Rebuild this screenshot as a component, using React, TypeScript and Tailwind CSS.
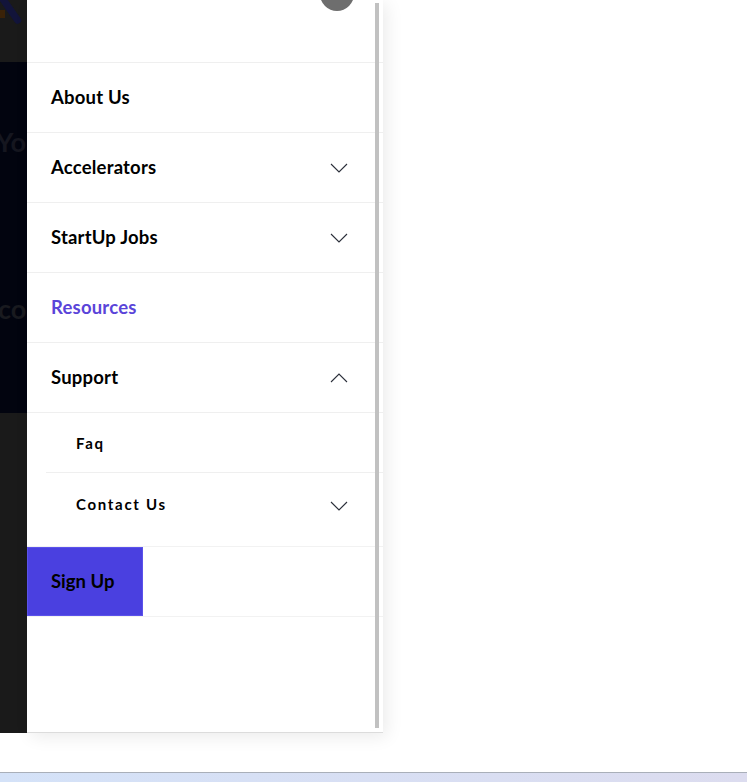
import React from "react";

type Item = { label: string; chevron?: "down" | "up"; active?: boolean };

const items: Item[] = [
  { label: "About Us" },
  { label: "Accelerators", chevron: "down" },
  { label: "StartUp Jobs", chevron: "down" },
  { label: "Resources", active: true },
  { label: "Support", chevron: "up" },
];

function Chevron({ dir = "down" }: { dir?: "down" | "up" }) {
  return (
    <svg width="18" height="10" viewBox="0 0 18 10" className="shrink-0">
      <polyline
        points={dir === "down" ? "1,1 9,9 17,1" : "1,9 9,1 17,9"}
        fill="none"
        stroke="#2b2f3a"
        strokeWidth="1.1"
      />
    </svg>
  );
}

export default function App() {
  return (
    <div className="w-[747px] h-[782px] flex flex-col bg-white overflow-hidden font-['Lato','Liberation_Sans',sans-serif]">
      <div className="h-[772px] flex flex-col">
        <div className="flex h-[733px]">
          {/* page behind the drawer */}
          <div className="w-[27px] flex flex-col">
            <div className="h-[62px] bg-[#1a1a1a] relative overflow-hidden">
              <div className="absolute left-0 top-[10px] w-[5px] h-[8px] bg-[#3a2208]" />
              <div className="absolute left-[7px] -top-[6px] w-[7px] h-[32px] rounded-full bg-[#12143a] rotate-[-35deg]" />
            </div>
            <div className="h-[351px] bg-[#02040f] flex flex-col text-[#15161f] font-bold text-[27px] leading-none overflow-hidden">
              <span className="mt-[66px] -ml-[4px] whitespace-nowrap">You</span>
              <span className="mt-[140px] -ml-[2px] text-[#191a1f] whitespace-nowrap">co</span>
            </div>
            <div className="flex-1 bg-[#1a1a1a]" />
          </div>

          {/* drawer */}
          <div className="w-[356px] h-[733px] bg-white relative shadow-[4px_4px_16px_rgba(0,0,0,0.08)] border-b border-[#dcdcdc]">
            <div className="h-[63px] border-b border-[#efefef] relative overflow-hidden">
              <div className="absolute left-[293px] -top-[23px] w-[34px] h-[34px] rounded-full bg-[#6e6e6e]" />
            </div>
            {items.map((it) => (
              <div
                key={it.label}
                className="h-[70px] border-b border-[#efefef] flex items-center justify-between pl-[24px] pr-[35px]"
              >
                <span
                  className={`text-[18.5px] font-bold tracking-[0.2px] ${it.active ? "text-[#5a44d9]" : "text-black"}`}
                >
                  {it.label}
                </span>
                {it.chevron && <Chevron dir={it.chevron} />}
              </div>
            ))}
            <div className="ml-[19px]">
              <div className="h-[60px] border-b border-[#efefef] flex items-center pl-[30px] pt-[1px]">
                <span className="text-[15px] font-bold tracking-[1.7px] text-black">Faq</span>
              </div>
              <div className="h-[73px] flex items-start justify-between pl-[30px] pr-[35px] pt-[20px]">
                <span className="text-[15px] font-bold tracking-[1.7px] text-black">Contact Us</span>
                <div className="pt-[8px]">
                  <Chevron />
                </div>
              </div>
            </div>
            <div className="h-[71px] border-y border-[#f2f2f2] flex">
              <button className="w-[116px] h-full bg-[#4a40e0] border border-[#5b52ea] text-black text-[18.5px] font-bold pl-[23px] text-left">
                Sign Up
              </button>
            </div>
            <div className="absolute right-[4px] top-[3px] w-[4px] h-[725px] bg-[#c1c1c1]" />
          </div>
          <div className="flex-1" />
        </div>
        <div className="flex-1" />
      </div>
      <div className="h-[10px] border-t border-[#a9afb9] bg-gradient-to-r from-[#d4e2f8] to-[#dcdcef]" />
    </div>
  );
}
